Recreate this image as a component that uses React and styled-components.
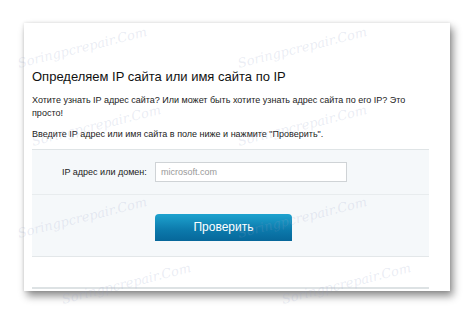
import React from "react";
import styled, { createGlobalStyle } from "styled-components";

const GlobalStyle = createGlobalStyle`
  html, body {
    margin: 0;
    padding: 0;
    background: #ffffff;
  }
  body {
    font-family: "Liberation Sans", Arial, sans-serif;
    color: #111;
  }
`;

const Page = styled.div`
  width: 474px;
  height: 316px;
  padding: 23px 24px 0 24px;
  box-sizing: border-box;
  position: relative;
  overflow: hidden;
`;

const Card = styled.div`
  width: 426px;
  height: 268px;
  box-sizing: border-box;
  background: #fff;
  padding: 0 21px 0 8px;
  box-shadow: 3px 5px 8px rgba(0, 0, 0, 0.45), 0 0 3px rgba(0, 0, 0, 0.12);
  display: flex;
  flex-direction: column;
`;

const Title = styled.h1`
  margin: 46px 0 0 0;
  font-size: 13px;
  font-weight: normal;
  line-height: 15px;
  color: #111;
  white-space: nowrap;
`;

const Text = styled.p`
  margin: ${(p) => p.top}px 0 0 0;
  font-size: 9px;
  line-height: 13px;
  color: #222;
  white-space: nowrap;
`;

const Panel = styled.div`
  margin-top: 8px;
  background: #f5f8fa;
  border-top: 1px solid #dfe4e6;
  border-bottom: 1px solid #e3e7e9;
`;

const FieldRow = styled.div`
  height: 44px;
  display: flex;
  align-items: center;
  padding-left: 30px;
  border-bottom: 1px solid #e8ecee;
`;

const Label = styled.label`
  font-size: 9px;
  color: #222;
  width: 93px;
  white-space: nowrap;
`;

const Input = styled.div`
  width: 185px;
  height: 18px;
  border: 1px solid #cfd3d6;
  background: #fff;
  font-size: 9px;
  color: #999;
  line-height: 18px;
  padding-left: 5px;
  box-sizing: content-box;
`;

const ButtonRow = styled.div`
  height: 61px;
  box-sizing: border-box;
  padding: 19px 0 0 123px;
`;

const Button = styled.button`
  display: block;
  width: 137px;
  height: 27px;
  border: none;
  border-radius: 4px 4px 0 0;
  background: linear-gradient(#1ea3cf, #0c79ab 60%, #06679a);
  color: #fff;
  font-family: "Liberation Sans", Arial, sans-serif;
  font-size: 12px;
  padding: 0 0 2px 0;
`;

const Footer = styled.div`
  height: 30px;
  border-bottom: 2px solid #dde2e4;
`;

const Mark = styled.span`
  position: absolute;
  font-family: "DejaVu Serif", serif;
  font-style: italic;
  font-size: 13px;
  color: rgba(150, 160, 200, 0.2);
  transform: rotate(-14deg);
  pointer-events: none;
  white-space: nowrap;
`;

const marks = [
  [16, 40],
  [236, 40],
  [30, 118],
  [236, 118],
  [16, 210],
  [236, 210],
  [60, 276],
  [280, 276],
];

export default function App() {
  return (
    <Page>
      <GlobalStyle />
      <Card>
        <Title>Определяем IP сайта или имя сайта по IP</Title>
        <Text top={10}>
          Хотите узнать IP адрес сайта? Или может быть хотите узнать адрес сайта по его IP? Это
          <br />
          просто!
        </Text>
        <Text top={8}>Введите IP адрес или имя сайта в поле ниже и нажмите "Проверить".</Text>
        <Panel>
          <FieldRow>
            <Label>IP адрес или домен:</Label>
            <Input>microsoft.com</Input>
          </FieldRow>
          <ButtonRow>
            <Button>Проверить</Button>
          </ButtonRow>
        </Panel>
        <Footer />
      </Card>
      {marks.map(([x, y], i) => (
        <Mark key={i} style={{ left: x, top: y }}>
          Soringpcrepair.Com
        </Mark>
      ))}
    </Page>
  );
}
